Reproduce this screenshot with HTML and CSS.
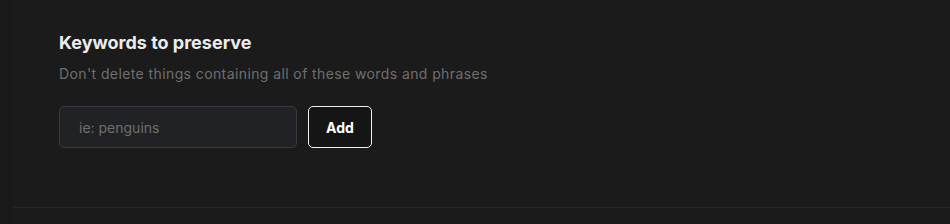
FILE: index.html
```html
<!DOCTYPE html>
<html lang="en">
<head>
    <meta charset="UTF-8">
    <meta name="viewport" content="width=device-width, initial-scale=1.0">
    <title>Keywords to preserve</title>
    <link rel="stylesheet" href="styles.css">
</head>
<body>
    <div class="layout">
        <div class="sidebar"></div>
        <div class="main">
            <div class="section">
                <h2 class="title">Keywords to preserve</h2>
                <p class="subtitle">Don't delete things containing all of these words and phrases</p>
                <div class="keyword-form">
                    <input class="keyword-input" type="text" placeholder="ie: penguins">
                    <button class="add-button">Add</button>
                </div>
            </div>
        </div>
    </div>
</body>
</html>
```

FILE: styles.css
```css
body {
    margin: 0;
    padding: 0;
    background-color: #1b1b1b;
    color: #ececec;
    font-family: Inter, "Noto Sans", sans-serif;
}
.layout {
    display: flex;
    height: 224px;
}
.sidebar {
    width: 13px;
    background-color: #191919;
}
.main {
    flex: 1;
}
.section {
    padding: 30px 46px 0 46px;
    height: 177px;
    border-bottom: 1px solid #262626;
}
.title {
    margin: 0;
    font-size: 18px;
    font-weight: 700;
    line-height: 26px;
    color: #ececec;
}
.subtitle {
    margin: 8px 0 0 0;
    font-size: 14px;
    line-height: 20px;
    letter-spacing: 0.4px;
    color: #6f6f6f;
}
.keyword-form {
    display: flex;
    gap: 11px;
    margin-top: 22px;
}
.keyword-input {
    width: 238px;
    height: 42px;
    box-sizing: border-box;
    padding: 0 19px;
    background-color: #212225;
    border: 1px solid #3a3b3f;
    border-radius: 5px;
    color: #ececec;
    font-family: inherit;
    font-size: 14px;
    outline: none;
}
.keyword-input::placeholder {
    color: #6f6f6f;
}
.add-button {
    width: 64px;
    height: 42px;
    background-color: #151515;
    border: 1px solid #f0f0f0;
    border-radius: 5px;
    color: #ffffff;
    font-family: inherit;
    font-size: 14px;
    font-weight: 700;
    cursor: pointer;
}
```
